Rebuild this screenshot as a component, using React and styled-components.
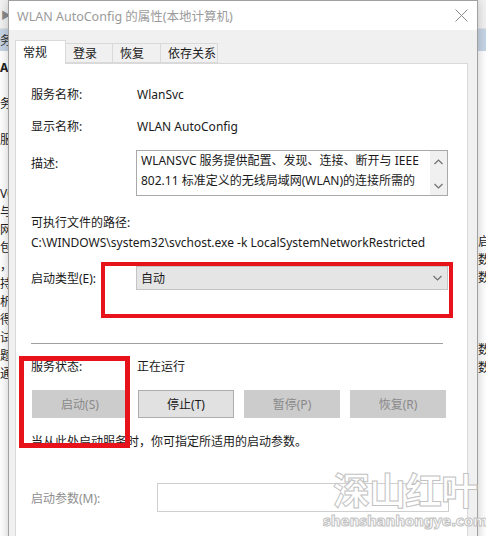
import styled, { createGlobalStyle } from 'styled-components';

const GlobalStyle = createGlobalStyle`
  html, body {
    margin: 0;
    padding: 0;
  }
  body {
    width: 486px;
    height: 536px;
    overflow: hidden;
    background: #ffffff;
    font-family: "Noto Sans", "Noto Sans CJK SC", sans-serif;
    font-size: 12px;
    color: #1a1a1a;
  }
`;

const leftLines = ['务', '', '服', '', '', 'VC', '与', '网', '包', '，', '持', '析', '得', '试', '题', '通'];
const rightLines = ['启', '数', '数', '', '', '', '数', '数'];

function Chevron({ up }) {
    return (
        <svg width="9" height="6" viewBox="0 0 9 6">
            <polyline
                points={up ? '0.5,5 4.5,1 8.5,5' : '0.5,1 4.5,5 8.5,1'}
                fill="none"
                stroke="#707070"
                strokeWidth="1.2"
            />
        </svg>
    );
}

function App() {
    return (
        <Desktop>
            <GlobalStyle />
            <Toolbar><Arrow>▶</Arrow></Toolbar>
            <HeaderBand><span>务</span></HeaderBand>
            <ListArea>
                <LeftPane>
                    <BoldBit>Au</BoldBit>
                    {leftLines.map((t, i) => <Line key={i}>{t}</Line>)}
                </LeftPane>
                <RightPane>
                    {rightLines.map((t, i) => <Line key={i}>{t}</Line>)}
                </RightPane>
            </ListArea>

            <Dialog>
                <TitleBar>
                    <span>WLAN AutoConfig 的属性(本地计算机)</span>
                    <svg width="13" height="13" viewBox="0 0 13 13">
                        <path d="M0.5 0.5 L12.5 12.5 M12.5 0.5 L0.5 12.5" stroke="#8a8a8a" strokeWidth="1" />
                    </svg>
                </TitleBar>

                <TabStrip>
                    <Tab active w={51}>常规</Tab>
                    <Tab w={48}>登录</Tab>
                    <Tab w={49}>恢复</Tab>
                    <Tab w={58}>依存关系</Tab>
                </TabStrip>

                <Panel>
                    <Field top={20}>
                        <Label>服务名称:</Label>
                        <span>WlanSvc</span>
                    </Field>
                    <Field top={12}>
                        <Label>显示名称:</Label>
                        <span>WLAN AutoConfig</span>
                    </Field>
                    <DescRow>
                        <Label>描述:</Label>
                        <TextBox>
                            <BoxText>
                                WLANSVC 服务提供配置、发现、连接、断开与 IEEE<br />
                                802.11 标准定义的无线局域网(WLAN)的连接所需的
                            </BoxText>
                            <ScrollBar>
                                <Chevron up />
                                <Chevron />
                            </ScrollBar>
                        </TextBox>
                    </DescRow>
                    <Field top={16}>可执行文件的路径:</Field>
                    <Field top={0}>C:\WINDOWS\system32\svchost.exe -k LocalSystemNetworkRestricted</Field>
                    <ComboRow>
                        <Label>启动类型(E):</Label>
                        <Combo>
                            <span>自动</span>
                            <Chevron />
                        </Combo>
                    </ComboRow>
                    <Separator />
                    <Field top={12}>
                        <Label>服务状态:</Label>
                        <span>正在运行</span>
                    </Field>
                    <ButtonRow>
                        <Button disabled>启动(S)</Button>
                        <Button>停止(T)</Button>
                        <Button disabled>暂停(P)</Button>
                        <Button disabled>恢复(R)</Button>
                    </ButtonRow>
                    <Field top={13}>当从此处启动服务时，你可指定所适用的启动参数。</Field>
                    <ParamRow>
                        <Label dim w={126}>启动参数(M):</Label>
                        <ParamInput />
                    </ParamRow>

                    <Mark left={85} top={198} w={352} h={56} b={4} />
                    <Mark left={3} top={292} w={111} h={92} b={5} />
                </Panel>
            </Dialog>

            <Watermark>
                <BigMark>深山红叶</BigMark>
                <SmallMark>shenshanhongye.com</SmallMark>
            </Watermark>
        </Desktop>
    );
}

export default App;

const Desktop = styled.div`
    position: relative;
    width: 486px;
    height: 536px;
    overflow: hidden;
    background: #ffffff;
`;

const Toolbar = styled.div`
    height: 28px;
    background: #f2f2f2;
    border-bottom: 1px solid #e2e2e2;
    display: flex;
    align-items: center;
    padding-left: 1px;
`;

const Arrow = styled.span`
    font-size: 10px;
    color: #8a8a8a;
`;

const HeaderBand = styled.div`
    height: 22px;
    background: #c6d5e6;
    display: flex;
    align-items: center;
    font-size: 12px;
    color: #333;
`;

const ListArea = styled.div`
    display: flex;
    justify-content: space-between;
`;

const LeftPane = styled.div`
    width: 60px;
    padding-top: 8px;
    font-size: 12px;
    color: #222;
`;

const RightPane = styled.div`
    width: 8px;
    padding-top: 182px;
    font-size: 12px;
    color: #222;
    white-space: nowrap;
    overflow: hidden;
`;

const BoldBit = styled.div`
    font-weight: bold;
    line-height: 18px;
    margin-bottom: 18px;
`;

const Line = styled.div`
    height: 18px;
    line-height: 18px;
`;

const Dialog = styled.div`
    position: absolute;
    left: 8px;
    top: 0;
    width: 470px;
    height: 560px;
    box-sizing: border-box;
    background: #f0f0f0;
    border: 1px solid #a0a0a0;
    box-shadow: 0 0 10px rgba(0, 0, 0, 0.22);
    display: flex;
    flex-direction: column;
`;

const TitleBar = styled.div`
    height: 29px;
    background: #ffffff;
    display: flex;
    align-items: center;
    justify-content: space-between;
    padding: 0 9px 0 8px;
    color: #9b9b9b;
    font-size: 12.5px;
`;

const TabStrip = styled.div`
    margin-top: 10px;
    height: 23px;
    padding-left: 6px;
    display: flex;
    align-items: flex-end;
    position: relative;
    z-index: 1;
`;

const Tab = styled.div`
    box-sizing: border-box;
    width: ${p => p.w}px;
    height: ${p => (p.active ? 24 : 20)}px;
    margin-left: -1px;
    margin-bottom: ${p => (p.active ? -1 : 0)}px;
    padding-left: 7px;
    padding-top: ${p => (p.active ? 3 : 1)}px;
    background: ${p => (p.active ? '#ffffff' : '#f0f0f0')};
    border: 1px solid #d9d9d9;
    border-bottom: ${p => (p.active ? 'none' : '1px solid #d9d9d9')};
    line-height: 17px;
    color: #1a1a1a;
    &:first-child {
        margin-left: 0;
    }
`;

const Panel = styled.div`
    position: relative;
    flex: 1;
    margin: 0 9px 0 6px;
    padding: 0 15px;
    background: #ffffff;
    border: 1px solid #d9d9d9;
    display: flex;
    flex-direction: column;
`;

const Field = styled.div`
    display: flex;
    align-items: center;
    height: 20px;
    margin-top: ${p => p.top}px;
    white-space: nowrap;
`;

const Label = styled.span`
    flex: none;
    width: ${p => p.w || 106}px;
    color: ${p => (p.dim ? '#8e8e8e' : '#1a1a1a')};
`;

const DescRow = styled.div`
    display: flex;
    margin-top: 14px;
    height: 46px;

    & > ${Label} {
        line-height: 20px;
        margin-top: 4px;
    }
`;

const TextBox = styled.div`
    width: 312px;
    margin-left: -1px;
    box-sizing: border-box;
    border: 1px solid #a9a9a9;
    display: flex;
    justify-content: space-between;
    overflow: hidden;
`;

const BoxText = styled.div`
    padding: 0 0 0 4px;
    line-height: 20px;
    white-space: nowrap;
    overflow: hidden;
`;

const ScrollBar = styled.div`
    flex: none;
    width: 17px;
    background: #f0f0f0;
    display: flex;
    flex-direction: column;
    align-items: center;
    justify-content: space-between;
    padding: 8px 0 6px;
    box-sizing: border-box;
`;

const ComboRow = styled.div`
    display: flex;
    align-items: center;
    margin-top: 14px;
    height: 24px;
`;

const Combo = styled.div`
    width: 312px;
    height: 24px;
    margin-left: -1px;
    box-sizing: border-box;
    background: #e5e5e5;
    border: 1px solid #c4c4c4;
    display: flex;
    align-items: center;
    justify-content: space-between;
    padding: 0 5px 0 4px;
`;

const Separator = styled.div`
    width: 412px;
    height: 1px;
    margin-top: 53px;
    background: #a0a0a0;
`;

const ButtonRow = styled.div`
    display: grid;
    grid-template-columns: repeat(4, 1fr);
    column-gap: 10px;
    width: 414px;
    margin: 14px 0 0 1px;
`;

const Button = styled.button`
    height: 28px;
    box-sizing: border-box;
    font-family: inherit;
    font-size: 12px;
    border: 1px solid ${p => (p.disabled ? '#cccccc' : '#adadad')};
    background: ${p => (p.disabled ? '#cccccc' : '#e1e1e1')};
    color: ${p => (p.disabled ? '#8a8a8a' : '#1a1a1a')};
    padding: 0;
`;

const ParamRow = styled.div`
    display: flex;
    align-items: center;
    margin-top: 32px;
    height: 29px;
`;

const ParamInput = styled.div`
    width: 292px;
    height: 29px;
    box-sizing: border-box;
    border: 1px solid #cfcfcf;
    background: #ffffff;
`;

const Mark = styled.div`
    position: absolute;
    left: ${p => p.left}px;
    top: ${p => p.top}px;
    width: ${p => p.w}px;
    height: ${p => p.h}px;
    box-sizing: border-box;
    border: ${p => p.b}px solid #e8121a;
    z-index: 2;
`;

const Watermark = styled.div`
    position: absolute;
    left: 330px;
    top: 466px;
    width: 150px;
    display: flex;
    flex-direction: column;
    align-items: center;
    pointer-events: none;
    color: rgba(255, 255, 255, 0.92);
    -webkit-text-stroke: 1px #c2c2c2;
    font-family: "Noto Sans CJK SC", sans-serif;
    font-weight: bold;
`;

const BigMark = styled.div`
    font-size: 37px;
    line-height: 46px;
    letter-spacing: -1px;
`;

const SmallMark = styled.div`
    font-family: "DejaVu Sans", sans-serif;
    font-size: 14px;
    line-height: 18px;
    letter-spacing: -0.4px;
`;
